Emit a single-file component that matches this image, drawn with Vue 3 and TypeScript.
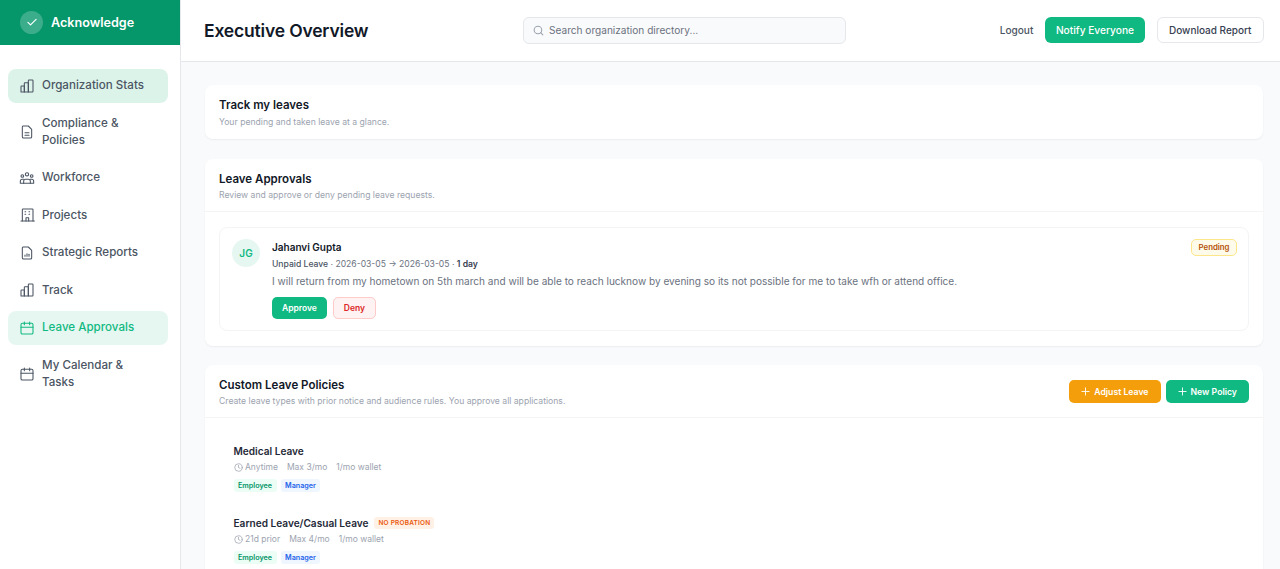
<template>
  <div class="app">
    <aside class="sidebar">
      <div class="brand">
        <span class="brand-mark">
          <svg viewBox="0 0 24 24" width="14" height="14" fill="none" stroke="#fff" stroke-width="2" stroke-linecap="round" stroke-linejoin="round"><path d="M5 12.5l4.5 4.5L19 7.5" /></svg>
        </span>
        <span class="brand-name">Acknowledge</span>
      </div>
      <nav class="nav">
        <a v-for="item in navItems" :key="item.label" class="nav-item" :class="{ soft: item.state === 'soft', active: item.state === 'active' }">
          <svg class="nav-icon" viewBox="0 0 24 24" fill="none" stroke="currentColor" stroke-width="1.6" stroke-linecap="round" stroke-linejoin="round">
            <path v-for="d in icons[item.icon]" :key="d" :d="d" />
          </svg>
          <span>{{ item.label }}</span>
        </a>
      </nav>
    </aside>

    <div class="content">
      <header class="topbar">
        <h1 class="page-title">Executive Overview</h1>
        <div class="search">
          <svg viewBox="0 0 24 24" width="13" height="13" fill="none" stroke="#9ca3af" stroke-width="2" stroke-linecap="round"><circle cx="11" cy="11" r="7" /><path d="M20 20l-4-4" /></svg>
          <span>Search organization directory...</span>
        </div>
        <div class="top-actions">
          <span class="logout">Logout</span>
          <button class="btn-notify">Notify Everyone</button>
          <button class="btn-download">Download Report</button>
        </div>
      </header>

      <main class="main">
        <section class="card">
          <div class="card-head">
            <h2>Track my leaves</h2>
            <p>Your pending and taken leave at a glance.</p>
          </div>
        </section>

        <section class="card">
          <div class="card-head bordered">
            <h2>Leave Approvals</h2>
            <p>Review and approve or deny pending leave requests.</p>
          </div>
          <div class="approvals">
            <div class="request">
              <div class="avatar">JG</div>
              <div class="req-body">
                <p class="req-name">Jahanvi Gupta</p>
                <p class="req-meta"><span class="strong">Unpaid Leave</span> · 2026-03-05 → 2026-03-05 · <b>1 day</b></p>
                <p class="req-text">I will return from my hometown on 5th march and will be able to reach lucknow by evening so its not possible for me to take wfh or attend office.</p>
                <div class="req-actions">
                  <button class="btn-approve">Approve</button>
                  <button class="btn-deny">Deny</button>
                </div>
              </div>
              <span class="pending">Pending</span>
            </div>
          </div>
        </section>

        <section class="card">
          <div class="card-head bordered with-actions">
            <div>
              <h2>Custom Leave Policies</h2>
              <p>Create leave types with prior notice and audience rules. You approve all applications.</p>
            </div>
            <div class="policy-actions">
              <button class="btn-small amber">
                <svg viewBox="0 0 10 10" width="9" height="9" fill="none" stroke="#fff" stroke-width="1" stroke-linecap="round"><path d="M5 1v8M1 5h8" /></svg>
                Adjust Leave
              </button>
              <button class="btn-small green">
                <svg viewBox="0 0 10 10" width="9" height="9" fill="none" stroke="#fff" stroke-width="1" stroke-linecap="round"><path d="M5 1v8M1 5h8" /></svg>
                New Policy
              </button>
            </div>
          </div>
          <div class="policies">
            <div v-for="p in policies" :key="p.name" class="policy">
              <p class="policy-name">{{ p.name }}<span v-if="p.flag" class="flag">{{ p.flag }}</span></p>
              <p class="policy-meta">
                <span class="notice">
                  <svg viewBox="0 0 24 24" width="9" height="9" fill="none" stroke="#9ca3af" stroke-width="2" stroke-linecap="round"><circle cx="12" cy="12" r="10" /><path d="M12 6v6l4 2" /></svg>
                  {{ p.notice }}
                </span>
                <span>{{ p.max }}</span>
                <span>1/mo wallet</span>
              </p>
              <div class="tags">
                <span class="tag emp">Employee</span>
                <span class="tag mgr">Manager</span>
              </div>
            </div>
          </div>
        </section>
      </main>
    </div>
  </div>
</template>

<script setup lang="ts">
type IconName = 'chart' | 'doc' | 'people' | 'building' | 'report' | 'calendar'

const icons: Record<IconName, string[]> = {
  chart: ['M3 21v-8a1 1 0 0 1 1-1h4v9H4a1 1 0 0 1-1-1z', 'M8 21V8a1 1 0 0 1 1-1h5v14z', 'M14 21V4a1 1 0 0 1 1-1h5a1 1 0 0 1 1 1v16a1 1 0 0 1-1 1z'],
  doc: ['M6 3h8l5 5v11a2 2 0 0 1-2 2H7a2 2 0 0 1-2-2V5a2 2 0 0 1 1-2z', 'M9 13h6', 'M9 17h6'],
  people: ['M12 4a2.5 2.5 0 1 0 0 5 2.5 2.5 0 0 0 0-5z', 'M5 7a2 2 0 1 0 0 4 2 2 0 0 0 0-4z', 'M19 7a2 2 0 1 0 0 4 2 2 0 0 0 0-4z', 'M7 20v-3a3 3 0 0 1 3-3h4a3 3 0 0 1 3 3v3z', 'M7 20H2v-3a3 3 0 0 1 3-3h2', 'M17 20h5v-3a3 3 0 0 0-3-3h-2'],
  building: ['M5 21V4a1 1 0 0 1 1-1h14a1 1 0 0 1 1 1v17', 'M3 21h20', 'M9 7h1', 'M15 7h1', 'M9 11h1', 'M15 11h1', 'M10.5 21v-5h4v5'],
  report: ['M6 3h8l5 5v11a2 2 0 0 1-2 2H7a2 2 0 0 1-2-2V5a2 2 0 0 1 1-2z', 'M9 17v-2', 'M12 17v-4', 'M15 17v-3'],
  calendar: ['M5 5h14a2 2 0 0 1 2 2v12a2 2 0 0 1-2 2H5a2 2 0 0 1-2-2V7a2 2 0 0 1 2-2z', 'M8 3v4', 'M16 3v4', 'M3 11h18'],
}

const navItems: { label: string; icon: IconName; state?: 'soft' | 'active' }[] = [
  { label: 'Organization Stats', icon: 'chart', state: 'soft' },
  { label: 'Compliance & Policies', icon: 'doc' },
  { label: 'Workforce', icon: 'people' },
  { label: 'Projects', icon: 'building' },
  { label: 'Strategic Reports', icon: 'report' },
  { label: 'Track', icon: 'chart' },
  { label: 'Leave Approvals', icon: 'calendar', state: 'active' },
  { label: 'My Calendar & Tasks', icon: 'calendar' },
]

const policies = [
  { name: 'Medical Leave', notice: 'Anytime', max: 'Max 3/mo' },
  { name: 'Earned Leave/Casual Leave', notice: '21d prior', max: 'Max 4/mo', flag: 'No probation' },
]
</script>

<style>
html, body { margin: 0; height: 100%; overflow: hidden; }
</style>

<style scoped>
* { box-sizing: border-box; margin: 0; padding: 0; }

.app {
  display: flex;
  height: 569px;
  overflow: hidden;
  font-family: Inter, 'Noto Sans', sans-serif;
  color: #111827;
  background: #f8fafc;
}

/* Sidebar */
.sidebar {
  width: 181px;
  flex-shrink: 0;
  background: #fff;
  border-right: 1px solid #e5e7eb;
}

.brand {
  height: 45px;
  background: #059669;
  display: flex;
  align-items: center;
  gap: 8px;
  padding: 0 20px 1px;
}

.brand-mark {
  width: 23px;
  height: 23px;
  border-radius: 50%;
  background: rgba(255,255,255,0.22);
  display: flex;
  align-items: center;
  justify-content: center;
}

.brand-name {
  font-size: 12.6px;
  font-weight: 600;
  color: #fff;
}

.nav {
  display: flex;
  flex-direction: column;
  gap: 4px;
  padding: 24px 12px 0 8px;
}

.nav-item {
  display: flex;
  align-items: center;
  gap: 7px;
  padding: 8.25px 11px;
  border-radius: 8px;
  font-size: 11.6px;
  font-weight: 500;
  line-height: 17px;
  color: #4b5563;
}

.nav-item.soft { background: #dcf3ea; }
.nav-item.active { background: #e6f7f1; color: #10b981; }

.nav-icon { width: 16px; height: 16px; flex-shrink: 0; }

/* Top bar */
.content { flex: 1; min-width: 0; display: flex; flex-direction: column; }

.topbar {
  height: 62px;
  flex-shrink: 0;
  background: #fff;
  border-bottom: 1px solid #e5e7eb;
  display: flex;
  align-items: center;
  padding: 0 16px 1px 23px;
}

.page-title {
  width: 319px;
  font-size: 17.5px;
  font-weight: 600;
  letter-spacing: -0.01em;
  color: #111827;
}

.search {
  width: 323px;
  height: 27px;
  display: flex;
  align-items: center;
  gap: 4px;
  padding: 0 8px;
  background: #f9fafb;
  border: 1px solid #e5e7eb;
  border-radius: 6px;
  font-size: 10.1px;
  color: #6b7280;
}

.top-actions {
  margin-left: auto;
  display: flex;
  align-items: center;
  gap: 12px;
}

.logout { font-size: 10.1px; font-weight: 500; color: #4b5563; }

button { font-family: inherit; cursor: pointer; }

.btn-notify {
  height: 26px;
  padding: 0 10.5px;
  background: #10b981;
  border: none;
  border-radius: 6px;
  font-size: 10.2px;
  font-weight: 500;
  color: #fff;
}

.btn-download {
  height: 26px;
  padding: 0 11.5px;
  background: #fff;
  border: 1px solid #e5e7eb;
  border-radius: 6px;
  font-size: 10px;
  font-weight: 500;
  color: #374151;
}

/* Main */
.main {
  flex: 1;
  min-height: 0;
  overflow: hidden;
  padding: 23px 17px 0 24px;
  display: flex;
  flex-direction: column;
  gap: 19.5px;
}

.card {
  flex-shrink: 0;
  background: #fff;
  border-radius: 8px;
  box-shadow: 0 1px 2px rgba(15,23,42,0.06);
}

.card-head { padding: 13px 14px 11.5px; }
.card-head.bordered { padding-bottom: 10px; border-bottom: 1px solid #f3f4f6; }
.card-head h2 { font-size: 11.5px; font-weight: 600; line-height: 15px; color: #111827; }
.card-head p { font-size: 8.65px; line-height: 12px; margin-top: 2.5px; color: #9ca3af; }

.with-actions { display: flex; align-items: flex-start; justify-content: space-between; }
.with-actions p { margin-top: 2px; }
.policy-actions { display: flex; gap: 5px; margin-top: 2px; }

.btn-small {
  height: 23px;
  padding: 0 12px;
  border: none;
  border-radius: 5px;
  font-size: 8.7px;
  font-weight: 600;
  color: #fff;
  display: flex;
  align-items: center;
  gap: 4px;
}

.btn-small.amber { background: #f59e0b; }
.btn-small.green { background: #10b981; }

/* Approval row */
.approvals { padding: 14.5px 14px 15px; }

.request {
  display: flex;
  align-items: flex-start;
  gap: 12px;
  padding: 11px 11px 11px 12px;
  border: 1px solid #f3f4f6;
  border-radius: 8px;
}

.avatar {
  width: 28px;
  height: 28px;
  flex-shrink: 0;
  border-radius: 50%;
  background: #e6f7f1;
  color: #10b981;
  font-size: 10px;
  font-weight: 600;
  display: flex;
  align-items: center;
  justify-content: center;
}

.req-body { flex: 1; min-width: 0; }
.req-name { font-size: 10px; font-weight: 600; line-height: 16px; color: #111827; }
.req-meta { font-size: 8.6px; line-height: 12px; margin-top: 3.5px; color: #6b7280; }
.req-meta .strong { font-weight: 500; color: #4b5563; }
.req-meta b { font-weight: 600; color: #374151; }
.req-text { font-size: 10.07px; line-height: 15px; margin-top: 3.5px; color: #6b7280; }

.req-actions { display: flex; gap: 6px; margin-top: 8px; }

.btn-approve {
  height: 22px;
  padding: 0 10px;
  background: #10b981;
  border: none;
  border-radius: 5px;
  font-size: 8.5px;
  font-weight: 600;
  color: #fff;
}

.btn-deny {
  height: 22px;
  padding: 0 10px;
  background: #fef2f2;
  border: 1px solid #fecaca;
  border-radius: 5px;
  font-size: 8.5px;
  font-weight: 600;
  color: #dc2626;
}

.pending {
  padding: 1.5px 6.5px;
  background: #fffbeb;
  border: 1px solid #fde68a;
  border-radius: 5px;
  font-size: 7.8px;
  font-weight: 600;
  line-height: 12px;
  color: #b45309;
}

/* Policies */
.policies { padding: 26px 28.5px 0; }
.policy { height: 72px; }
.policy-name { display: flex; align-items: center; gap: 6px; font-size: 10.1px; font-weight: 600; line-height: 14px; color: #1f2937; }

.flag {
  padding: 1px 4px;
  background: #fff1e6;
  border-radius: 3px;
  font-size: 6.5px;
  font-weight: 600;
  line-height: 10px;
  letter-spacing: 0.03em;
  text-transform: uppercase;
  color: #ea580c;
}

.policy-meta {
  display: flex;
  gap: 9px;
  margin-top: 3px;
  font-size: 8.5px;
  line-height: 12px;
  color: #9ca3af;
}

.notice { display: flex; align-items: center; gap: 2.5px; }
.tags { display: flex; gap: 4px; margin-top: 6px; }

.tag {
  padding: 1px 4.5px;
  border-radius: 3px;
  font-size: 7.2px;
  font-weight: 600;
  line-height: 11px;
}

.tag.emp { background: #ecfdf5; color: #059669; }
.tag.mgr { background: #eff6ff; color: #2563eb; }
</style>
